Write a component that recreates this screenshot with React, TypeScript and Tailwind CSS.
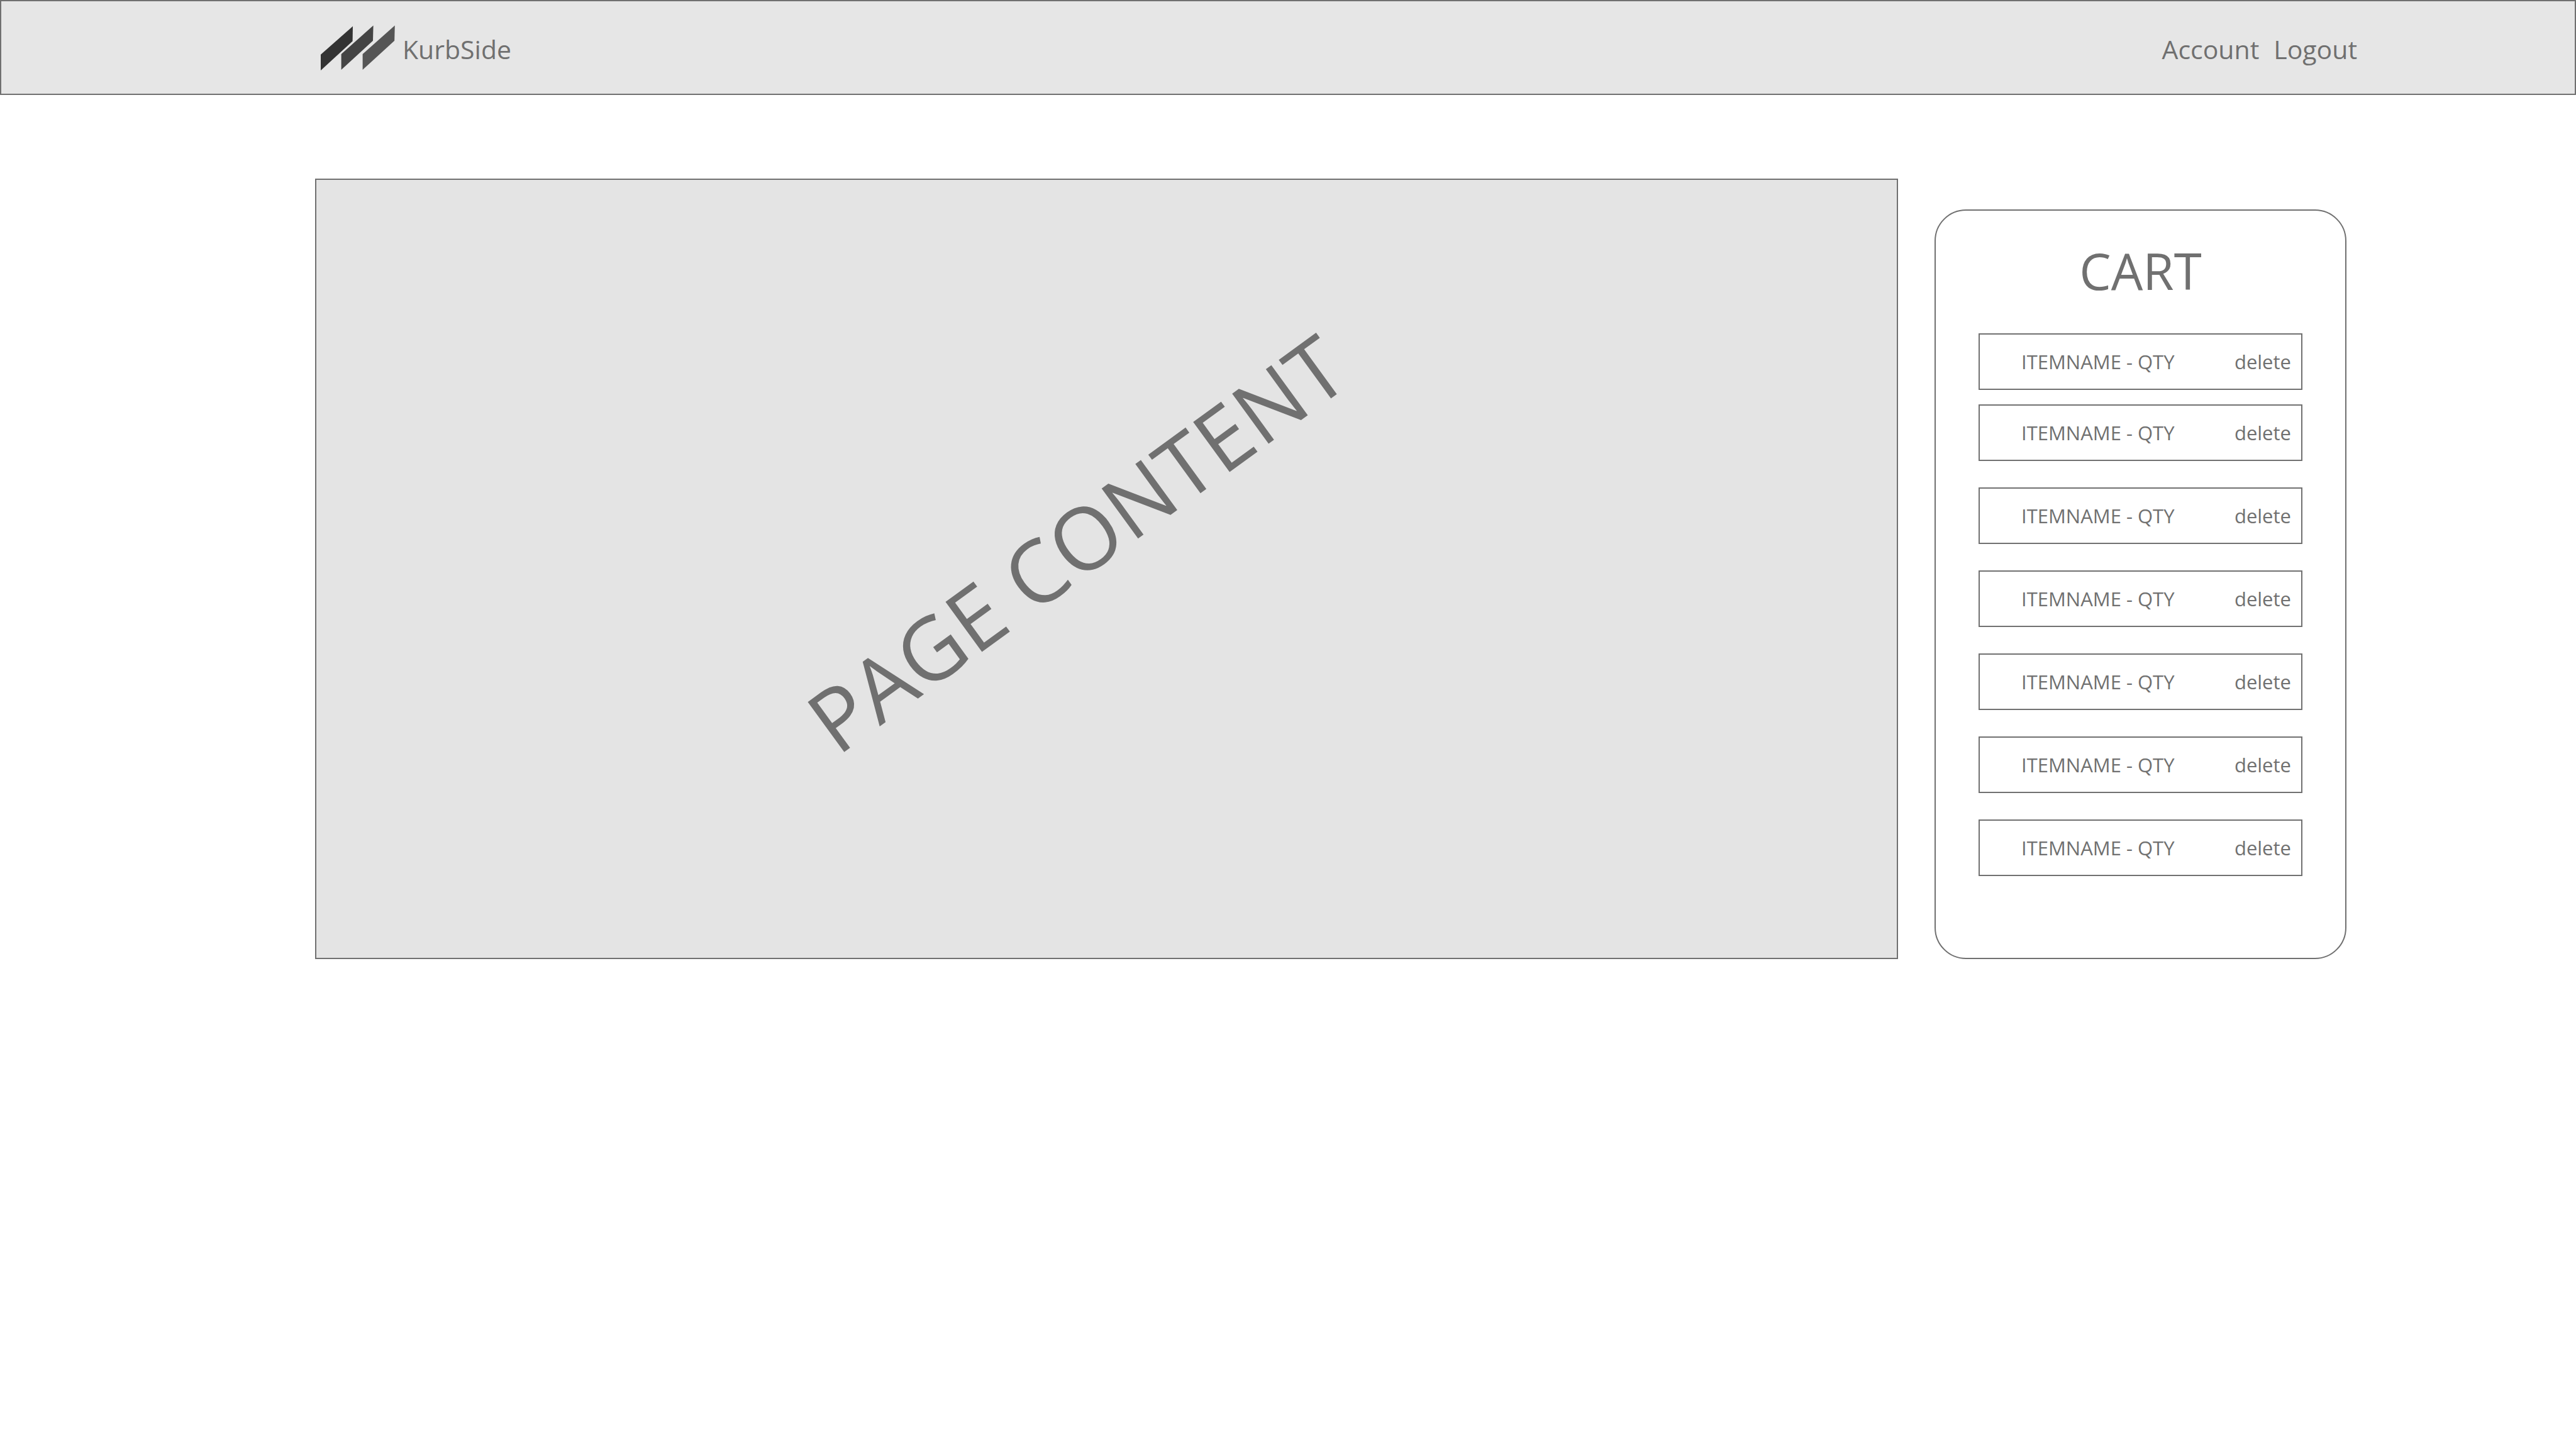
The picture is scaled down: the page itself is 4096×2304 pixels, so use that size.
const cartItems = Array.from({ length: 7 }, (_, index) => ({
  id: index + 1,
  label: "ITEMNAME - QTY",
}));

function Logo() {
  return (
    <svg
      className="h-[72px] w-[118px] shrink-0"
      viewBox="0 0 118 72"
      aria-hidden="true"
    >
      <polygon points="0,46.7 51,1.7 50.6,25.5 0,72" fill="#333333" />
      <polygon points="32.6,46 83.6,0.4 83,24.8 32.6,71" fill="#444444" />
      <polygon points="66.6,46 117.8,0.4 117.2,24.8 66.6,71" fill="#555555" />
    </svg>
  );
}

function Header() {
  return (
    <header className="flex h-[151px] items-center justify-between border-2 border-[#707070] bg-[#e6e6e6] pr-[346px] pl-[508px] text-[41px] leading-[56px]">
      <a href="#home" className="flex items-center gap-3">
        <Logo />
        <span className="pt-1">KurbSide</span>
      </a>
      <nav className="flex gap-[23px] pt-1">
        <a href="#account">Account</a>
        <a href="#logout">Logout</a>
      </nav>
    </header>
  );
}

function Cart() {
  return (
    <aside className="mt-[49px] w-[655px] shrink-0 rounded-[50px] border-2 border-[#707070] px-[68px] pt-[45px] pb-[130px]">
      <h2 className="text-center text-[80px] leading-[100px]">CART</h2>
      <ul className="mt-[50px] flex flex-col gap-[42px]">
        {cartItems.map((item) => (
          <li
            key={item.id}
            className="flex h-[90px] items-center justify-between border-2 border-[#707070] pr-4 pl-[66px] text-[31px] leading-[42px] first:-mb-[19px]"
          >
            <span>{item.label}</span>
            <button type="button" className="cursor-pointer">
              delete
            </button>
          </li>
        ))}
      </ul>
    </aside>
  );
}

export default function App() {
  return (
    <div className="min-h-screen bg-white font-['Open_Sans',sans-serif] text-[#707070]">
      <Header />
      <main className="flex gap-[58px] pt-[133px] pr-[365px] pl-[501px]">
        <section className="flex flex-1 items-center justify-center border-2 border-[#707070] bg-[#e4e4e4] pr-[100px] pb-[86px]">
          <h1 className="-rotate-36 text-[138px] leading-none whitespace-nowrap">
            PAGE CONTENT
          </h1>
        </section>
        <Cart />
      </main>
    </div>
  );
}
